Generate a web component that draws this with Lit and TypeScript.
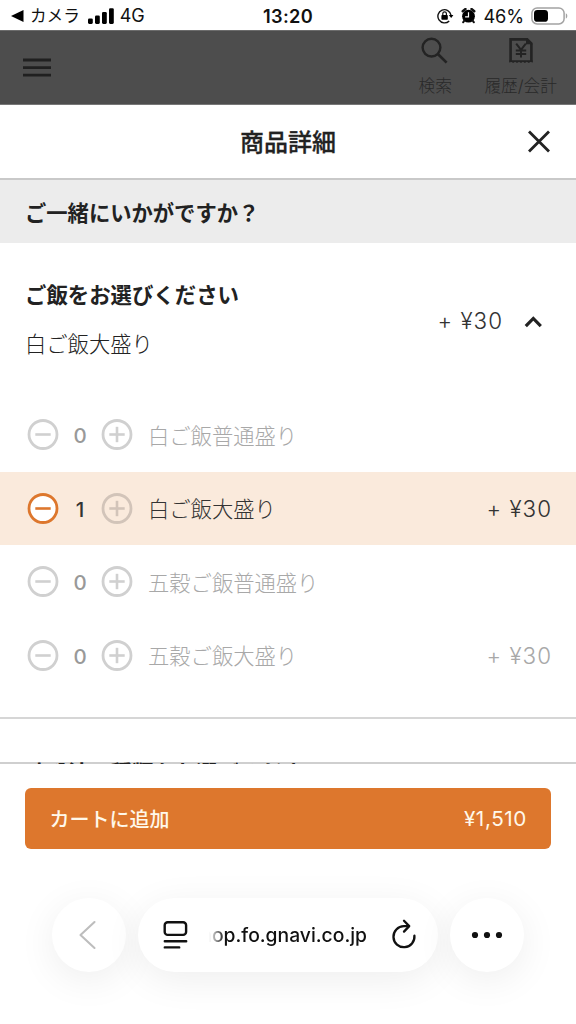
import { LitElement, html, css, svg, nothing } from "lit";
import { customElement, property } from "lit/decorators.js";
import { classMap } from "lit/directives/class-map.js";

interface Rice {
  name: string;
  count: number;
  price?: string;
}

const RICE: Rice[] = [
  { name: "白ご飯普通盛り", count: 0 },
  { name: "白ご飯大盛り", count: 1, price: "+ ¥30" },
  { name: "五穀ご飯普通盛り", count: 0 },
  { name: "五穀ご飯大盛り", count: 0, price: "+ ¥30" },
];

@customElement("status-bar")
class StatusBar extends LitElement {
  static styles = css`
    :host { display: grid; grid-template-columns: 1fr auto 1fr; align-items: center; height: 30px;
      color: #111; background: #fff; font-size: 17.5px; line-height: 30px; padding: 1px 8px 0 11px; box-sizing: border-box; }
    .left { display: flex; align-items: center; white-space: nowrap; }
    .right { display: flex; align-items: center; justify-content: flex-end; white-space: nowrap; }
    .app { font-size: 16.6px; margin-left: 6px; font-weight: 400; }
    .bars { margin-left: 8px; }
    .net { margin-left: 6px; font-size: 18px; letter-spacing: -0.1px; }
    .time { font-weight: 600; font-size: 18.2px; letter-spacing: 0.3px; margin-right: 3px; }
    .lock { margin-right: 7px; }
    .alarm { margin-right: 7px; }
    .pct { font-size: 18.2px; margin-right: 7px; letter-spacing: -0.1px; }
    svg { display: block; }
  `;
  render() {
    return html`
      <div class="left">
        <svg width="13" height="12" viewBox="0 0 13 12"><path d="M12.5 0v12L0 6z" fill="#000" /></svg>
        <span class="app">カメラ</span>
        <svg class="bars" width="26" height="17" viewBox="0 0 26 17">
          <rect x="0" y="10.4" width="4.8" height="5.5" rx="1.3" />
          <rect x="7" y="7.4" width="4.8" height="8.5" rx="1.3" />
          <rect x="14" y="3.9" width="4.8" height="12" rx="1.3" />
          <rect x="21" y="0.2" width="4.8" height="15.7" rx="1.3" />
        </svg>
        <span class="net">4G</span>
      </div>
      <div class="time">13:20</div>
      <div class="right">
        <svg class="lock" width="17" height="16" viewBox="0 0 17 16">
          <path d="M12.2 12.9A6.6 6.6 0 1 1 14 7.2" fill="none" stroke="#111" stroke-width="1.4" />
          <path d="M11.8 6.9h4.6l-2.2 3.2z" />
          <rect x="4.4" y="7" width="6.4" height="4.8" rx="0.8" />
          <path d="M5.8 7.2V5.6a1.8 1.8 0 0 1 3.6 0v1.6" fill="none" stroke="#111" stroke-width="1.2" />
        </svg>
        <svg class="alarm" width="15" height="16" viewBox="0 0 14 16">
          <circle cx="7" cy="8.2" r="6.4" />
          <path d="M1.2 3.2 4 1M12.8 3.2 10 1" stroke="#111" stroke-width="2.4" stroke-linecap="round" />
          <path d="m2.8 12.6-1.2 1.7m9.6-1.7 1.2 1.7" stroke="#111" stroke-width="2" stroke-linecap="round" />
          <path d="M7 4.2v4.6H3.6" fill="none" stroke="#fff" stroke-width="1.2" />
        </svg>
        <span class="pct">46%</span>
        <svg width="37" height="18" viewBox="0 0 37 18">
          <rect x="0.9" y="0.9" width="32.2" height="16" rx="5.2" fill="none" stroke="#a3a3a3" stroke-width="1.5" />
          <rect x="3" y="3" width="14" height="11.8" rx="3.4" />
          <path d="M34.8 6.2c2 .8 2 4.6 0 5.4z" fill="#a3a3a3" />
        </svg>
      </div>`;
  }
}

@customElement("site-header")
class SiteHeader extends LitElement {
  static styles = css`
    :host { display: flex; justify-content: space-between; height: 75px; box-sizing: border-box; background: #4d4d4d;
      border-top: 1px solid #6c6c6c; border-bottom: 1px solid #777; color: #292929; padding: 0 19px 0 23px; }
    .menu { display: block; margin-top: 26px; }
    .nav { display: flex; }
    .item { display: flex; flex-direction: column; align-items: center; font-size: 16.7px; line-height: 22px; white-space: nowrap; font-weight: 300; }
    .search { margin-right: 32.5px; }
    .glyph { display: block; height: 30px; margin: 5px 0 9px; }
  `;
  render() {
    return html`
      <svg class="menu" width="28" height="22" viewBox="0 0 28 22">
        <path d="M0 3h28M0 10.6h28M0 18.2h28" stroke="#202020" stroke-width="2.8" />
      </svg>
      <div class="nav">
        <div class="item search">
          <svg class="glyph" width="28" height="30" viewBox="0 0 28 30">
            <circle cx="10.5" cy="11.6" r="8.9" fill="none" stroke="#232323" stroke-width="2.4" />
            <path d="m16.6 17.8 9 8.8" stroke="#232323" stroke-width="2.7" />
          </svg>
          <span>検索</span>
        </div>
        <div class="item">
          <svg class="glyph" width="24" height="30" viewBox="0 0 24 30">
            <path d="M1.6 26V3.4h16.6l4.2 4.2V26" fill="none" stroke="#232323" stroke-width="2.6" />
            <path d="M.4 24.3h23.2v2.4l-1.9-1-1.9 1.3-2-1.3-1.9 1.3-2-1.3-1.9 1.3-2-1.3L8 27l-1.9-1.3-2 1.3-1.8-1.3-1.9 1z" fill="#232323" />
            <path d="m17 2.4 6.6 5.8H17z" fill="#232323" />
            <path d="m7.2 7.6 4.8 6.2 4.8-6.2M12 13.5v8M6.8 14.4h10.4M6.8 18h10.4" fill="none" stroke="#232323" stroke-width="2" />
          </svg>
          <span>履歴/会計</span>
        </div>
      </div>`;
  }
}

@customElement("rice-row")
class RiceRow extends LitElement {
  @property({ attribute: false }) rice!: Rice;
  static styles = css`
    :host { display: block; }
    .row { display: flex; align-items: center; height: 73.6px; padding: 0 24px 0 27px; color: #a8a8a8; font-size: 21.3px; }
    .row.on { background: #faeadc; color: #333; }
    svg { display: block; flex: none; }
    .count { width: 42px; text-align: center; font-weight: 500; font-size: 20.5px; color: #999; padding-top: 1px; }
    .on .count { color: #333; }
    .name { margin-left: 15px; flex: 1; font-weight: 300; white-space: nowrap; padding-bottom: 2px; }
    .price { font-size: 22.4px; font-weight: 300; letter-spacing: 1px; white-space: nowrap; }
  `;
  private round(plus: boolean, active: boolean, tinted: boolean) {
    const c = active ? "#dd772d" : tinted ? "#d2c4b9" : "#d0d0d0";
    return html`<svg width="32" height="32" viewBox="0 0 32 32" fill="none" stroke=${c}>
      <circle cx="16" cy="15.5" r="14" stroke-width="2.8" fill=${active ? "#fff" : "none"} />
      <path d="M8.3 15.5h15.4" stroke-width="2.6" />
      ${plus ? svg`<path d="M16 7.8v15.4" stroke-width="2.6" />` : nothing}
    </svg>`;
  }
  render() {
    const on = this.rice.count > 0;
    return html`<div class=${classMap({ row: true, on })}>
      ${this.round(false, on, on)}
      <span class="count">${this.rice.count}</span>
      ${this.round(true, false, on)}
      <span class="name">${this.rice.name}</span>
      ${this.rice.price ? html`<span class="price">${this.rice.price}</span>` : nothing}
    </div>`;
  }
}

@customElement("browser-bar")
class BrowserBar extends LitElement {
  static styles = css`
    :host { display: flex; gap: 12px; padding: 49px 52px 52px; overflow: hidden; }
    .pill { height: 74px; border-radius: 37px; background: #fff; box-shadow: 0 8px 38px rgba(0, 0, 0, 0.07);
      display: flex; align-items: center; justify-content: center; box-sizing: border-box; }
    .round { width: 74px; }
    .back { padding-right: 3px; }
    .dots { padding-right: 1px; }
    .address { flex: 1; justify-content: flex-start; padding-left: 24px; }
    .url { width: 158px; margin-left: 21px; display: flex; justify-content: flex-end; overflow: hidden; white-space: nowrap;
      font-size: 19.3px; font-weight: 500; color: #111; line-height: 28px;
      -webkit-mask-image: linear-gradient(90deg, transparent 0, #000 16px); mask-image: linear-gradient(90deg, transparent 0, #000 16px); }
    .reload { margin-left: 24px; margin-bottom: 2px; }
    svg { display: block; flex: none; }
  `;
  render() {
    return html`
      <div class="pill round back">
        <svg width="20" height="30" viewBox="0 0 20 30"><path d="M16.5 2 2.5 15l14 13" fill="none" stroke="#bdbdbd" stroke-width="2.1" stroke-linecap="round" stroke-linejoin="round" /></svg>
      </div>
      <div class="pill address">
        <svg width="26" height="30" viewBox="0 0 26 30" fill="none" stroke="#111" stroke-width="2.4" stroke-linecap="round">
          <rect x="2.7" y="2.3" width="21.4" height="12.6" rx="3" />
          <path d="M2.8 21.2h21.4M2.8 27.4h14.4" />
        </svg>
        <span class="url">shop.fo.gnavi.co.jp</span>
        <svg class="reload" width="26" height="30" viewBox="0 0 26 30" fill="none" stroke="#111" stroke-width="2.3" stroke-linecap="round" stroke-linejoin="round">
          <path d="M23.4 16.6A10.5 10.5 0 1 1 12.9 7.2h4.6" />
          <path d="m13 1.8 5.2 5.3-5.2 5.5" />
        </svg>
      </div>
      <div class="pill round dots">
        <svg width="32" height="8" viewBox="0 0 32 8" fill="#111"><circle cx="4" cy="4" r="3.1" /><circle cx="16" cy="4" r="3.1" /><circle cx="28" cy="4" r="3.1" /></svg>
      </div>`;
  }
}

@customElement("app-root")
class AppRoot extends LitElement {
  static styles = css`
    :host { display: flex; flex-direction: column; width: 576px; height: 1024px; overflow: hidden; background: #fff; color: #222;
      font-family: Inter, "Noto Sans CJK JP", sans-serif; }
    .title { display: grid; grid-template-columns: 1fr auto 1fr; align-items: center; height: 75px; box-sizing: border-box;
      border-bottom: 2px solid #c9c9c9; flex: none; }
    .title-text { grid-column: 2; font-size: 24px; font-weight: 500; line-height: 36px; padding-top: 3px; -webkit-text-stroke: 0.3px #222; }
    .close { display: block; justify-self: end; margin-right: 25px; }
    .scroll { flex: 1; min-height: 0; overflow: hidden; position: relative; margin-bottom: -2px; }
    .suggest { height: 63px; line-height: 67px; background: #ececec; padding-left: 25px; font-size: 21.3px; font-weight: 700; box-sizing: border-box; }
    .group { display: flex; align-items: center; height: 155.3px; padding: 0 33px 0 25px; box-sizing: border-box; }
    .names { flex: 1; font-size: 21.3px; line-height: 49px; margin-top: -2px; }
    .heading { font-weight: 700; font-size: 21.4px; }
    .chosen { font-weight: 300; color: #222; }
    .price { font-size: 22.4px; font-weight: 300; letter-spacing: 1px; margin-right: 21px; color: #333; }
    .arrow { display: block; margin-top: 2px; }
    .next { margin-top: 24.3px; border-top: 2px solid #d6d6d6; padding: 38px 25px 0; font-size: 21.4px; font-weight: 700; line-height: 32px; }
    .footer { border-top: 2px solid #cfcfcf; padding: 24px 25px 0 24.5px; flex: none; }
    .cart { display: flex; align-items: center; justify-content: space-between; width: 100%; height: 61.5px; box-sizing: border-box;
      border: 0; border-radius: 6px; background: #dd772d; color: #fff8ea; padding: 0 24px 0 25px; font: inherit; font-size: 20px; font-weight: 500; }
    .total { font-size: 20.7px; font-weight: 400; letter-spacing: 0.6px; }
    browser-bar { flex: none; }
  `;
  render() {
    return html`
      <status-bar></status-bar>
      <site-header></site-header>
      <div class="title">
        <span class="title-text">商品詳細</span>
        <svg class="close" width="24" height="24" viewBox="0 0 24 24"><path d="m2 1.5 20 20M22 1.5 2 21.5" stroke="#222" stroke-width="2.8" /></svg>
      </div>
      <div class="scroll">
        <div class="suggest">ご一緒にいかがですか？</div>
        <div class="group">
          <div class="names">
            <div class="heading">ご飯をお選びください</div>
            <div class="chosen">白ご飯大盛り</div>
          </div>
          <span class="price">+ ¥30</span>
          <svg class="arrow" width="19" height="14" viewBox="0 0 19 14"><path d="m1.8 11.2 7.5-7.7 7.5 7.7" fill="none" stroke="#222" stroke-width="3.2" /></svg>
        </div>
        ${RICE.map((r) => html`<rice-row .rice=${r}></rice-row>`)}
        <div class="next">味噌汁の種類をお選びください</div>
      </div>
      <div class="footer">
        <button class="cart"><span>カートに追加</span><span class="total">¥1,510</span></button>
      </div>
      <browser-bar></browser-bar>`;
  }
}
